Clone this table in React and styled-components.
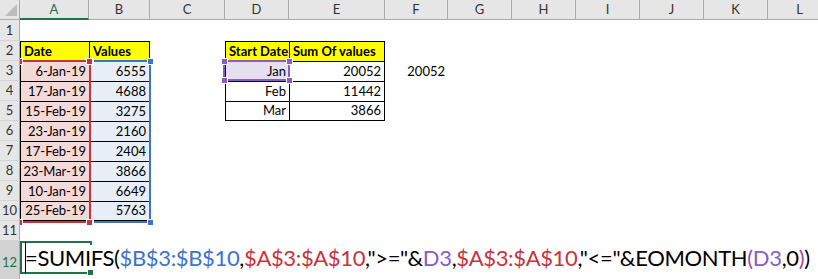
import React from "react";
import styled, { createGlobalStyle } from "styled-components";

const GlobalStyle = createGlobalStyle`
  html, body { margin: 0; padding: 0; background: #fff; }
  body { width: 818px; height: 279px; overflow: hidden; }
`;

const COLS = [20, 69, 61, 75, 64, 96, 63, 64, 64, 64, 64, 64, 64];
const LETTERS = ["A", "B", "C", "D", "E", "F", "G", "H", "I", "J", "K", "L"];

const Sheet = styled.div`
  position: relative;
  display: grid;
  grid-template-columns: ${COLS.map((c) => c + "px").join(" ")};
  grid-template-rows: 20px 21px repeat(10, 20px) 40px;
  width: 832px;
  font-family: Lato, "Liberation Sans", sans-serif;
  font-size: 13px;
  color: #000;
`;

const Corner = styled.div`
  box-sizing: border-box;
  background: #e6e6e6;
  border-right: 1px solid #ababab;
  border-bottom: 1px solid #ababab;
  display: flex;
  align-items: flex-end;
  justify-content: flex-end;
  padding: 0 2px 3px 0;
`;

const ColHead = styled.div`
  box-sizing: border-box;
  background: #e6e6e6;
  border-right: 1px solid #ababab;
  border-bottom: ${(p) => (p.$active ? "2px solid #217346" : "1px solid #ababab")};
  display: flex;
  align-items: center;
  justify-content: center;
  padding-bottom: ${(p) => (p.$active ? "0" : "1px")};
  color: ${(p) => (p.$active ? "#217346" : "#333")};
  font-size: 13px;
`;

const RowHead = styled.div`
  box-sizing: border-box;
  background: ${(p) => (p.$active ? "#d2d2d2" : "#e6e6e6")};
  border-right: 1px solid #ababab;
  border-bottom: 1px solid #d4d4d4;
  display: flex;
  align-items: flex-end;
  justify-content: center;
  padding-bottom: ${(p) => (p.$tall ? "10px" : "2px")};
  line-height: 15px;
  color: ${(p) => (p.$active ? "#217346" : "#333")};
  font-size: 13px;
`;

const Cell = styled.div`
  box-sizing: border-box;
  display: flex;
  align-items: flex-end;
  justify-content: ${(p) => (p.$right ? "flex-end" : "flex-start")};
  padding: 0 3px 2px 3px;
  line-height: 15px;
  white-space: nowrap;
  background: ${(p) => p.$fill || "#fff"};
  font-weight: ${(p) => (p.$bold ? 700 : 400)};
  border-top: ${(p) => (p.$bt ? "1px solid #000" : "none")};
  border-left: ${(p) => (p.$bl ? "1px solid #000" : "none")};
  border-right: ${(p) => (p.$br ? "1px solid #000" : "none")};
  border-bottom: ${(p) => (p.$bb ? "1px solid #000" : "none")};
`;

const FormulaCell = styled.div`
  grid-column: 2 / -1;
  position: relative;
  z-index: 2;
  display: flex;
  align-items: flex-start;
  padding: 4px 0 0 5px;
  font-size: 22px;
  letter-spacing: -0.35px;
  line-height: 25px;
  white-space: nowrap;
`;

const FormulaText = styled.span`
  background: #fff;
`;

const Part = styled.span`
  color: ${(p) => p.$c || "#000"};
`;

const Caret = styled.span`
  position: absolute;
  left: 5px;
  top: 1px;
  width: 1px;
  height: 31px;
  background: #000;
`;

const Overlay = styled.div`
  position: absolute;
  z-index: 1;
  left: 20px;
  top: 20px;
  right: 0;
  bottom: 0;
  overflow: hidden;
  pointer-events: none;
`;

const RangeBox = styled.div`
  position: absolute;
  box-sizing: border-box;
  left: ${(p) => p.$x - 20}px;
  top: ${(p) => p.$y - 20}px;
  width: ${(p) => p.$w}px;
  height: ${(p) => p.$h}px;
  border: 2px solid ${(p) => p.$c};
`;

const Handle = styled.div`
  position: absolute;
  width: 5px;
  height: 5px;
  left: ${(p) => p.$x - 20 - 3.5}px;
  top: ${(p) => p.$y - 20 - 3.5}px;
  background: ${(p) => p.$c};
  border: 1px solid #fff;
`;

const dates = ["6-Jan-19", "17-Jan-19", "15-Feb-19", "23-Jan-19", "17-Feb-19", "23-Mar-19", "10-Jan-19", "25-Feb-19"];
const values = [6555, 4688, 3275, 2160, 2404, 3866, 6649, 5763];
const summary = [["Jan", 20052], ["Feb", 11442], ["Mar", 3866]];

function cellProps(r, c) {
  const p = {};
  if ((c === 0 || c === 1) && r >= 2 && r <= 10) {
    p.$bt = true;
    p.$bl = true;
    if (c === 1) p.$br = true;
    if (r === 10) p.$bb = true;
    if (r === 2) {
      p.$fill = "#ffff00";
      p.$bold = true;
      p.text = c === 0 ? "Date" : "Values";
    } else {
      p.$right = true;
      p.$fill = c === 0 ? "#f4d9d9" : "#e8eef8";
      p.text = c === 0 ? dates[r - 3] : values[r - 3];
    }
  }
  if ((c === 3 || c === 4) && r >= 2 && r <= 5) {
    p.$bt = true;
    p.$bl = true;
    if (c === 4) p.$br = true;
    if (r === 5) p.$bb = true;
    if (r === 2) {
      p.$fill = "#ffff00";
      p.$bold = true;
      p.text = c === 3 ? "Start Date" : "Sum Of values";
    } else {
      p.$right = true;
      p.text = summary[r - 3][c - 3];
      if (c === 3 && r === 3) p.$fill = "#e5dfee";
    }
  }
  if (c === 5 && r === 3) {
    p.$right = true;
    p.text = 20052;
  }
  return p;
}

const BLUE = "#3f72c9";
const RED = "#c8323c";
const PURPLE = "#8a5cc6";
const PINK = "#a2479f";
const GREEN = "#217346";

const ranges = [
  { c: BLUE, x: 89, y: 60, w: 62, h: 163, handles: [[90, 61], [150, 61], [90, 222], [150, 222]] },
  { c: RED, x: 18, y: 60, w: 73, h: 163, handles: [[19.5, 61], [89.5, 61], [19.5, 222], [89.5, 222]] },
  { c: PURPLE, x: 223, y: 60, w: 67, h: 21, handles: [[224, 61], [289, 61], [224, 80], [289, 80]] },
  { c: GREEN, x: 20, y: 241, w: 72, h: 33, handles: [[90.5, 272.5]] },
];

export default function App() {
  const rows = [];
  for (let r = 1; r <= 11; r++) {
    rows.push(<RowHead key={"h" + r}>{r}</RowHead>);
    for (let c = 0; c < 12; c++) {
      const { text, ...rest } = cellProps(r, c);
      rows.push(
        <Cell key={r + "-" + c} {...rest}>
          {text}
        </Cell>
      );
    }
  }
  return (
    <>
      <GlobalStyle />
      <Sheet>
        <Corner>
          <svg width="12" height="12" viewBox="0 0 12 12">
            <polygon points="0,12 12,12 12,0" fill="#bcbcbc" />
          </svg>
        </Corner>
        {LETTERS.map((l, i) => (
          <ColHead key={l} $active={i === 0}>
            {l}
          </ColHead>
        ))}
        {rows}
        <RowHead $active $tall>
          12
        </RowHead>
        <FormulaCell>
          <FormulaText>
            <Part>=SUMIFS(</Part>
            <Part $c={BLUE}>$B$3:$B$10</Part>
            <Part>,</Part>
            <Part $c={RED}>$A$3:$A$10</Part>
            <Part>,"&gt;="&amp;</Part>
            <Part $c={PURPLE}>D3</Part>
            <Part>,</Part>
            <Part $c={RED}>$A$3:$A$10</Part>
            <Part>,"&lt;="&amp;EOMONTH</Part>
            <Part $c={PINK}>(</Part>
            <Part $c={PURPLE}>D3</Part>
            <Part>,0</Part>
            <Part $c={PINK}>)</Part>
            <Part>)</Part>
          </FormulaText>
          <Caret />
        </FormulaCell>
        <Overlay>
          {ranges.map((g, i) => (
            <React.Fragment key={i}>
              <RangeBox $c={g.c} $x={g.x} $y={g.y} $w={g.w} $h={g.h} />
              {g.handles.map(([hx, hy], j) => (
                <Handle key={j} $c={g.c} $x={hx} $y={hy} />
              ))}
            </React.Fragment>
          ))}
        </Overlay>
      </Sheet>
    </>
  );
}
